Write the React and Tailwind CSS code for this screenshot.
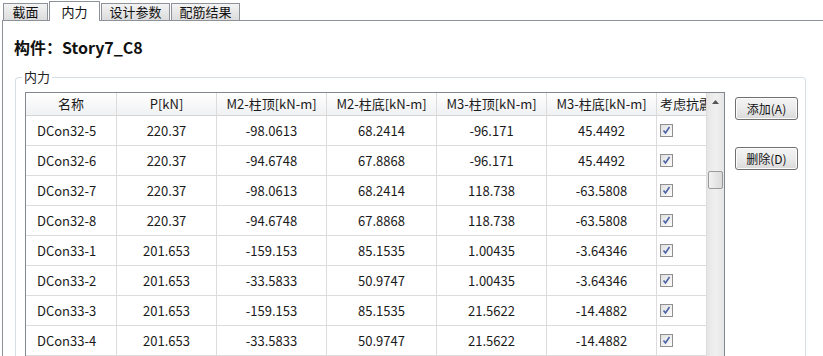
import React from 'react';

const COLS = [
  { key: 'name', title: '名称', w: 'w-[91px]', align: 'left' },
  { key: 'p', title: 'P[kN]', w: 'w-[100px]' },
  { key: 'm2t', title: 'M2-柱顶[kN-m]', w: 'w-[110px]' },
  { key: 'm2b', title: 'M2-柱底[kN-m]', w: 'w-[110px]' },
  { key: 'm3t', title: 'M3-柱顶[kN-m]', w: 'w-[110px]' },
  { key: 'm3b', title: 'M3-柱底[kN-m]', w: 'w-[110px]' },
];

const ROWS = [
  ['DCon32-5', '220.37', '-98.0613', '68.2414', '-96.171', '45.4492'],
  ['DCon32-6', '220.37', '-94.6748', '67.8868', '-96.171', '45.4492'],
  ['DCon32-7', '220.37', '-98.0613', '68.2414', '118.738', '-63.5808'],
  ['DCon32-8', '220.37', '-94.6748', '67.8868', '118.738', '-63.5808'],
  ['DCon33-1', '201.653', '-159.153', '85.1535', '1.00435', '-3.64346'],
  ['DCon33-2', '201.653', '-33.5833', '50.9747', '1.00435', '-3.64346'],
  ['DCon33-3', '201.653', '-159.153', '85.1535', '21.5622', '-14.4882'],
  ['DCon33-4', '201.653', '-33.5833', '50.9747', '21.5622', '-14.4882'],
];

const TABS = [
  { label: '截面', w: 'w-[45px]' },
  { label: '内力', w: 'w-[51px]', active: true },
  { label: '设计参数', w: 'w-[69px]' },
  { label: '配筋结果', w: 'w-[69px]' },
];

const Tab = ({ tab }) =>
  tab.active ? (
    <div className={`${tab.w} h-[20px] -mb-px relative z-10 border border-b-0 border-[#8d9199] bg-white flex items-center justify-center text-[13px] text-[#111]`}>
      {tab.label}
    </div>
  ) : (
    <div className={`${tab.w} h-[17px] border border-b-0 border-[#8d9199] bg-gradient-to-b from-[#f3f3f3] to-[#dcdcdc] flex items-center justify-center text-[13px] text-[#111]`}>
      {tab.label}
    </div>
  );

const Check = () => (
  <div className="w-[13px] h-[13px] border border-[#8f8f8f] bg-gradient-to-br from-[#e0e0e0] to-[#fbfbfb] flex items-center justify-center">
    <svg width="9" height="9" viewBox="0 0 9 9">
      <path d="M1.5 4.5 L3.5 7 L7.5 1" fill="none" stroke="#4b63a6" strokeWidth="1.6" />
    </svg>
  </div>
);

const Btn = ({ children }) => (
  <div className="w-[63px] h-[23px] border border-[#707070] rounded-[3px] bg-gradient-to-b from-[#f4f4f4] via-[#ebebeb] to-[#d9d9d9] flex items-center justify-center text-[12px] text-[#111] shadow-[inset_0_0_0_1px_#fcfcfc]">
    {children}
  </div>
);

export default function App() {
  return (
    <div
      className="w-[823px] h-[356px] overflow-hidden bg-white text-[#1a1a1a]"
      style={{ fontFamily: '"Noto Sans CJK SC", "Noto Sans", sans-serif' }}
    >
      {/* tab strip */}
      <div className="flex items-end h-[20px] pl-[3px] gap-[1px]">
        {TABS.map((t) => (
          <Tab key={t.label} tab={t} />
        ))}
      </div>

      {/* tab page */}
      <div className="ml-[2px] h-[340px] border-l border-t border-[#8d9199]">
        <div className="pl-[11px] pt-[15px] h-[44px] text-[16px] font-bold text-[#111] leading-[22px]">
          构件：Story7_C8
        </div>

        <div className="relative ml-[12px] mt-[12px] w-[791px] h-[300px] border border-b-0 border-[#d5dfe5] rounded-t-[4px] pt-[14px] pl-[9px] flex gap-[10px]">
          <div className="absolute left-[6px] -top-[10px] px-[2px] bg-white text-[13px] leading-[18px] text-[#222]">
            内力
          </div>

          {/* grid */}
          <div className="flex border border-b-0 border-[#828790] h-[300px]">
            <div className="flex flex-col text-[13px]">
              <div className="flex h-[23px] border-b border-[#d5d5d5] bg-gradient-to-b from-[#ffffff] to-[#f0f1f3]">
                {COLS.map((c) => (
                  <div key={c.key} className={`${c.w} border-r border-[#dcdcdc] flex items-center justify-center whitespace-nowrap`}>
                    {c.title}
                  </div>
                ))}
                <div className="w-[50px] border-r border-[#dcdcdc] flex items-center pl-[3px] whitespace-nowrap overflow-hidden">
                  考虑抗震
                </div>
              </div>
              {ROWS.map((r) => (
                <div key={r[0] + r[2] + r[4]} className="flex h-[30px] border-b border-[#dcdcdc]">
                  {r.map((v, i) => (
                    <div
                      key={i}
                      className={`${COLS[i].w} border-r border-[#dcdcdc] flex items-center ${i === 0 ? 'pl-[11px]' : 'justify-center'}`}
                    >
                      {v}
                    </div>
                  ))}
                  <div className="w-[50px] border-r border-[#dcdcdc] flex items-center pl-[3px]">
                    <Check />
                  </div>
                </div>
              ))}
            </div>

            {/* scrollbar */}
            <div className="w-[17px] bg-gradient-to-r from-[#e6e6e6] via-[#f0f0f0] to-[#e6e6e6] flex flex-col items-center">
              <div className="h-[17px] flex items-center justify-center">
                <svg width="7" height="4" viewBox="0 0 7 4">
                  <path d="M0 4 L3.5 0 L7 4 Z" fill="#555" />
                </svg>
              </div>
              <div className="mt-[61px] w-[15px] h-[18px] border border-[#9a9a9a] rounded-[2px] bg-gradient-to-r from-[#f2f2f2] to-[#dadada]" />
            </div>
          </div>

          <div className="flex flex-col gap-[27px] pt-[5px]">
            <Btn>添加(A)</Btn>
            <Btn>删除(D)</Btn>
          </div>
        </div>
      </div>
    </div>
  );
}
